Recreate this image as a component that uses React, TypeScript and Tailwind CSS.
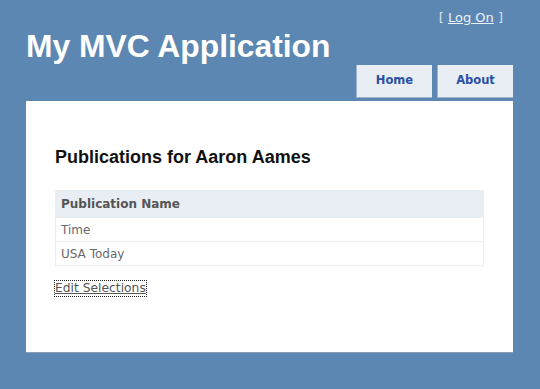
export default function App() {
  const publications = ['Time', 'USA Today'];

  return (
    <div className="min-h-screen bg-[#5c87b2] pr-[27px] pl-[26px]" style={{ fontFamily: '"DejaVu Sans", Verdana, sans-serif' }}>
      {/* Header */}
      <div className="flex h-[101px] justify-between">
        <h1 className="pt-[30px] font-['Liberation_Sans',Arial,sans-serif] text-[31.8px] leading-[32px] font-bold text-white">
          My MVC Application
        </h1>
        <div className="flex flex-col items-end">
          <div className="pt-[10px] pr-[10px] text-[13px] leading-[16px] text-[#d8e2ee]">
            [ <a href="#" className="text-[#eef3f9] underline">Log On</a> ]
          </div>
          <ul className="mt-auto mb-[3px] flex gap-[5px]">
            <li className="flex h-[33px] w-[76px] items-center justify-center border-b border-l border-[#9fb3c9] bg-[#e8eef4] text-[11.5px] font-bold text-[#2b4ea6]">
              Home
            </li>
            <li className="flex h-[33px] w-[76px] items-center justify-center border-b border-l border-[#9fb3c9] bg-[#e8eef4] text-[11.5px] font-bold text-[#2b4ea6]">
              About
            </li>
          </ul>
        </div>
      </div>

      {/* Main */}
      <div className="h-[252px] border-b border-[#8e9cb0] bg-white px-[29px] pt-[47px]">
        <h2 className="font-['Liberation_Sans',Arial,sans-serif] text-[18px] leading-[18px] font-bold text-[#111]">
          Publications for Aaron Aames
        </h2>
        <table className="mt-[24px] w-full border-collapse border border-[#e8eef4] text-[12px] text-[#696969]">
          <thead>
            <tr>
              <th className="h-[27px] bg-[#e8eef4] px-[5px] text-left font-bold text-[#555]">Publication Name</th>
            </tr>
          </thead>
          <tbody>
            {publications.map((p) => (
              <tr key={p}>
                <td className="h-[24px] border border-[#e8eef4] px-[5px]">{p}</td>
              </tr>
            ))}
          </tbody>
        </table>
        <a
          href="#"
          className="mt-[15px] inline-block text-[12.3px] leading-[15px] text-[#555] underline outline-1 outline-dotted outline-[#222]"
        >
          Edit Selections
        </a>
      </div>
    </div>
  );
}
